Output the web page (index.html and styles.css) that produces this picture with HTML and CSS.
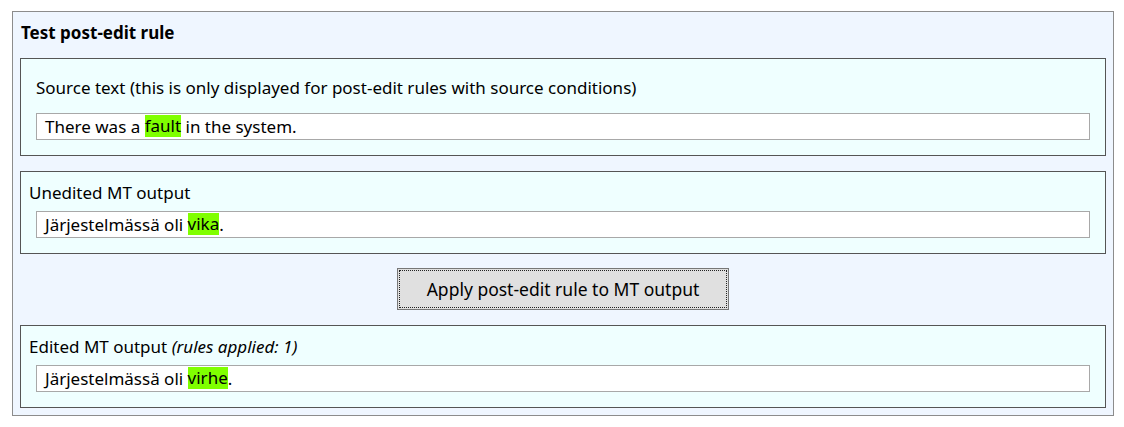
FILE: index.html
```html
<!DOCTYPE html>
<html>
<head>
<meta charset="utf-8">
<link rel="stylesheet" href="styles.css">
</head>
<body>
<div class="panel">
  <div class="title">Test post-edit rule</div>
  <div class="box box-source">
    <div class="label">Source text (this is only displayed for post-edit rules with source conditions)</div>
    <div class="field">There was a <span class="hl">fault</span> in the system.</div>
  </div>
  <div class="box box-gap">
    <div class="label">Unedited MT output</div>
    <div class="field">Järjestelmässä oli <span class="hl">vika</span>.</div>
  </div>
  <div class="btn-row">
    <button class="btn"><span class="btn-inner">Apply post-edit rule to MT output</span></button>
  </div>
  <div class="box">
    <div class="label">Edited MT output <em>(rules applied: 1)</em></div>
    <div class="field">Järjestelmässä oli <span class="hl">virhe</span>.</div>
  </div>
</div>
</body>
</html>
```
FILE: styles.css
```css
html, body {
  margin: 0;
  padding: 0;
  background: #ffffff;
}
body {
  padding: 11px 0 0 12px;
  font-family: "Noto Sans", "Open Sans", sans-serif;
  font-size: 17px;
  color: #000;
}
.panel {
  box-sizing: border-box;
  border: 1px solid #8c8c8c;
  background: #eff6ff;
  padding: 0 7px 7px 7px;
  width: 1102px;
}
.title {
  font-weight: bold;
  height: 46px;
  line-height: 42px;
  padding-left: 1px;
}
.box {
  border: 1px solid #555;
  background: #efffff;
  padding: 11px 15px 15px 15px;
}
.box-gap {
  margin-top: 15px;
}
.box-source {
  padding-top: 19px;
}
.box .label {
  margin-left: -7px;
  line-height: 20px;
  margin-bottom: 8px;
}
.box-source .label {
  margin-left: 0;
  margin-bottom: 15px;
}
.field {
  box-sizing: border-box;
  background: #fff;
  border: 1px solid #a8a8a8;
  height: 27px;
  line-height: 25px;
  padding-left: 8px;
  white-space: nowrap;
}
.hl {
  background: #7fff00;
  display: inline-block;
  line-height: 22px;
  vertical-align: top;
  margin-top: 1px;
}
.btn-row {
  display: flex;
  justify-content: center;
  padding: 14px 0 15px 0;
}
.btn {
  box-sizing: border-box;
  background: #e0e0e0;
  border: 1px solid #777;
  padding: 1px;
  font-family: inherit;
  font-size: 17.5px;
  color: #000;
  margin: 0;
  width: 332px;
  height: 42px;
}
.btn-inner {
  display: flex;
  align-items: center;
  justify-content: center;
  height: 100%;
  border: 1px dotted #222;
  box-sizing: border-box;
}
em {
  font-style: italic;
}
```
